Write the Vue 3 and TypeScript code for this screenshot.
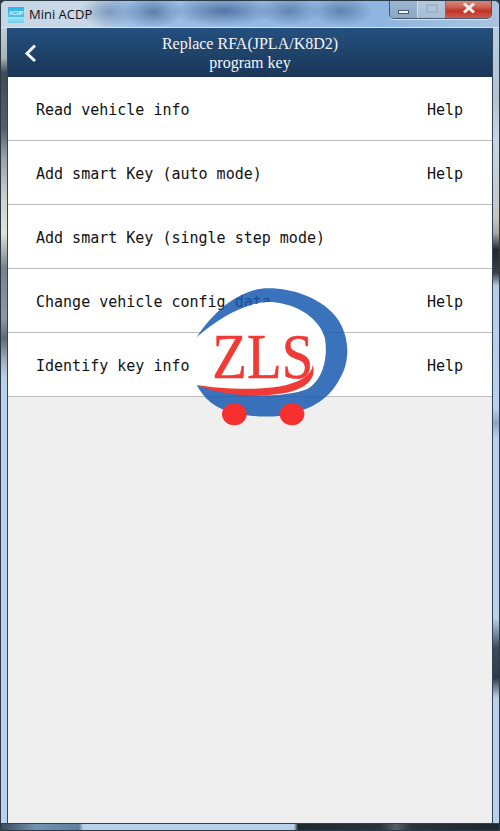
<script setup lang="ts">
interface Row { label: string; help: boolean }
const rows: Row[] = [
  { label: 'Read vehicle info', help: true },
  { label: 'Add smart Key (auto mode)', help: true },
  { label: 'Add smart Key (single step mode)', help: false },
  { label: 'Change vehicle config data', help: true },
  { label: 'Identify key info', help: true },
]
</script>

<template>
  <div class="window">
    <div class="titlebar">
      <div class="app-icon">ACDP</div>
      <span class="app-name">Mini ACDP</span>
      <div class="controls">
        <div class="ctl ctl-min"><i></i></div>
        <div class="ctl ctl-max"><i></i></div>
        <div class="ctl ctl-close">
          <svg width="14" height="10" viewBox="0 0 14 10"><path d="M2 0.5 L12 9.5 M12 0.5 L2 9.5" stroke="#f6f0ec" stroke-width="3" /></svg>
        </div>
      </div>
    </div>
    <div class="middle">
      <div class="edge edge-left"></div>
      <div class="content">
        <header class="header">
          <svg class="back" width="14" height="22" viewBox="0 0 14 22">
            <path d="M12 3.5 L4 11.5 L12 19" fill="none" stroke="#f2f5f8" stroke-width="3" />
          </svg>
          <div class="title">Replace RFA(JPLA/K8D2)<br />program key</div>
        </header>
        <ul class="list">
          <li v-for="r in rows" :key="r.label" class="row">
            <span>{{ r.label }}</span>
            <span v-if="r.help">Help</span>
          </li>
        </ul>
        <svg class="logo" width="180" height="170" viewBox="0 0 540 510">
          <path d="M50 200 C100 150 170 110 260 95 C340 95 400 130 435 200 C445 280 430 340 380 365 C300 385 140 380 50 345 Z" fill="#fff" />
          <path class="logo-blue" d="M50 202 C110 110 190 55 265 55 C340 55 430 85 475 150 C510 205 510 275 480 325 C450 385 400 415 330 432 C280 445 200 442 140 422 C100 410 72 385 50 345 C130 372 290 392 380 358 C425 335 445 270 435 205 C420 150 360 100 265 95 C190 100 110 150 50 202 Z" />
          <text x="97" y="325" class="zls" textLength="303" lengthAdjust="spacingAndGlyphs">ZLS</text>
          <path d="M50 345 C130 358 250 362 320 345 C365 332 395 315 398 285 C408 315 390 340 365 352 C330 372 270 378 200 376 C140 372 90 362 50 345 Z" fill="#f03a35" />
          <ellipse cx="163" cy="433" rx="37" ry="33" fill="#f5302e" />
          <ellipse cx="336" cy="433" rx="37" ry="33" fill="#f5302e" />
        </svg>
      </div>
      <div class="edge edge-right"></div>
    </div>
    <div class="bottom"></div>
  </div>
</template>

<style>
html, body { margin: 0; padding: 0; background: #2c3a46; }
</style>

<style scoped>
.window {
  width: 500px;
  height: 831px;
  box-sizing: border-box;
  border: 1px solid #2c3a46;
  border-radius: 6px 6px 0 0;
  display: flex;
  flex-direction: column;
  overflow: hidden;
  background: #b9d2ec;
}
.titlebar {
  height: 27px;
  box-sizing: border-box;
  flex: none;
  padding: 0 7px;
  display: flex;
  align-items: center;
  border-bottom: 1px solid #d6e5f2;
  background:
    radial-gradient(ellipse 30px 16px at 108px 11px, rgba(70,105,150,.5), transparent),
    radial-gradient(ellipse 30px 16px at 152px 11px, rgba(50,85,130,.6), transparent),
    radial-gradient(ellipse 52px 15px at 222px 10px, rgba(45,80,130,.65), transparent),
    radial-gradient(ellipse 32px 15px at 288px 10px, rgba(55,90,135,.55), transparent),
    radial-gradient(ellipse 32px 15px at 340px 10px, rgba(55,90,135,.55), transparent),
    linear-gradient(90deg, #c6d6e6 0, #c9d9e6 90px, #9dbfe6 130px, #8fb5e2 380px, #a9c4de 500px);
}
.app-icon {
  width: 16px;
  height: 16px;
  flex: none;
  margin: 1px 5px 0 0;
  box-sizing: border-box;
  padding-top: 3px;
  background: linear-gradient(#35b4e6 0, #48c0ea 60%, #a9e3f5 62%, #6fcdee 100%);
  color: #e8f8fd;
  font: 700 5px/6px "Liberation Sans", sans-serif;
  text-align: center;
}
.app-name { font: 13px "Open Sans", sans-serif; color: #111; }
.controls {
  margin: -9px 0 0 auto;
  display: flex;
  height: 18px;
  border: 1px solid #46566a;
  border-top: 0;
  border-radius: 0 0 5px 5px;
  overflow: hidden;
  box-shadow: 0 1px 0 rgba(255,255,255,.6);
}
.ctl { display: flex; align-items: center; justify-content: center; }
.ctl-min { width: 27px; background: linear-gradient(#9db8d4, #8aa7c6); border-right: 1px solid #d4e0ea; }
.ctl-min i { width: 11px; height: 4px; margin-top: 6px; background: #f3f6f8; border: 1px solid #4a5a6a; box-sizing: border-box; }
.ctl-max { width: 27px; background: linear-gradient(#b6cadc, #a6bdd3); border-right: 1px solid #66788a; }
.ctl-max i { width: 12px; height: 9px; margin-top: -1px; border: 2px solid #9fb4c8; box-sizing: border-box; }
.ctl-close { width: 45px; background: linear-gradient(#d98d7e, #d0675a 35%, #bf3229 60%, #cb5b4e); }
.ctl-close svg { margin-top: -2px; }
.middle { flex: 1; display: flex; min-height: 0; }
.edge { width: 6px; flex: none; }
.edge-left {
  border-right: 1px solid #2e4258;
  background: linear-gradient(180deg, #c3ced8 0, #a9b2ba 30px, #3f4a54 45px, #525f6a 100px, #99a2a8 130px, #cbd1cc 170px, #dfe3d8 205px, #77828e 240px, #8f99a6 290px, #5e6a7a 310px, #a7b4c4 335px, #b9d2ec 350px);
}
.edge-right {
  border-left: 1px solid #2e4258;
  background: linear-gradient(180deg, #b4cee6 0, #b4c2cf 70px, #c6d6e4 110px, #c9c5bf 190px, #aaa6a2 205px, #24282c 222px, #3a4048 245px, #b5cde6 258px, #b9d2ec 380px, #8fa6c0 395px, #b9d2ec 410px, #b9d2ec 590px, #3c4a5a 620px, #2e3a48 650px, #b9d2ec 670px);
}
.content {
  flex: 1;
  position: relative;
  background: #efefef;
  display: flex;
  flex-direction: column;
}
.header {
  height: 49px;
  flex: none;
  position: relative;
  display: flex;
  align-items: center;
  justify-content: center;
  background: linear-gradient(#24507f, #1a3656);
}
.back { position: absolute; left: 15px; top: 14px; }
.title {
  font: 16px/19px "Liberation Serif", serif;
  color: #f4f6f8;
  text-align: center;
}
.list { list-style: none; margin: 0; padding: 0; background: #fff; }
.row {
  height: 64px;
  box-sizing: border-box;
  padding: 2px 29px 0 28px;
  display: flex;
  align-items: center;
  justify-content: space-between;
  border-bottom: 1px solid #bdbdbd;
  font: 15px "DejaVu Sans Mono", monospace;
  color: #111;
}
.logo { position: absolute; left: 172px; top: 242px; }
.logo-blue { fill: #1759af; opacity: .85; }
.zls { font: 189px "Liberation Serif", serif; fill: #f03a35; stroke: #f03a35; stroke-width: 1.5px; }
.bottom {
  height: 7px;
  flex: none;
  border-top: 1px solid #2e4258;
  box-sizing: border-box;
  background: linear-gradient(90deg, #3c4a5a 0, #7393b3 35px, #5f7fa0 78px, #b8d0ea 82px, #b8d0ea 293px, #1d2830 297px, #28343e 380px, #55626c 395px, #28343e 410px, #1d2830 498px);
}
</style>
